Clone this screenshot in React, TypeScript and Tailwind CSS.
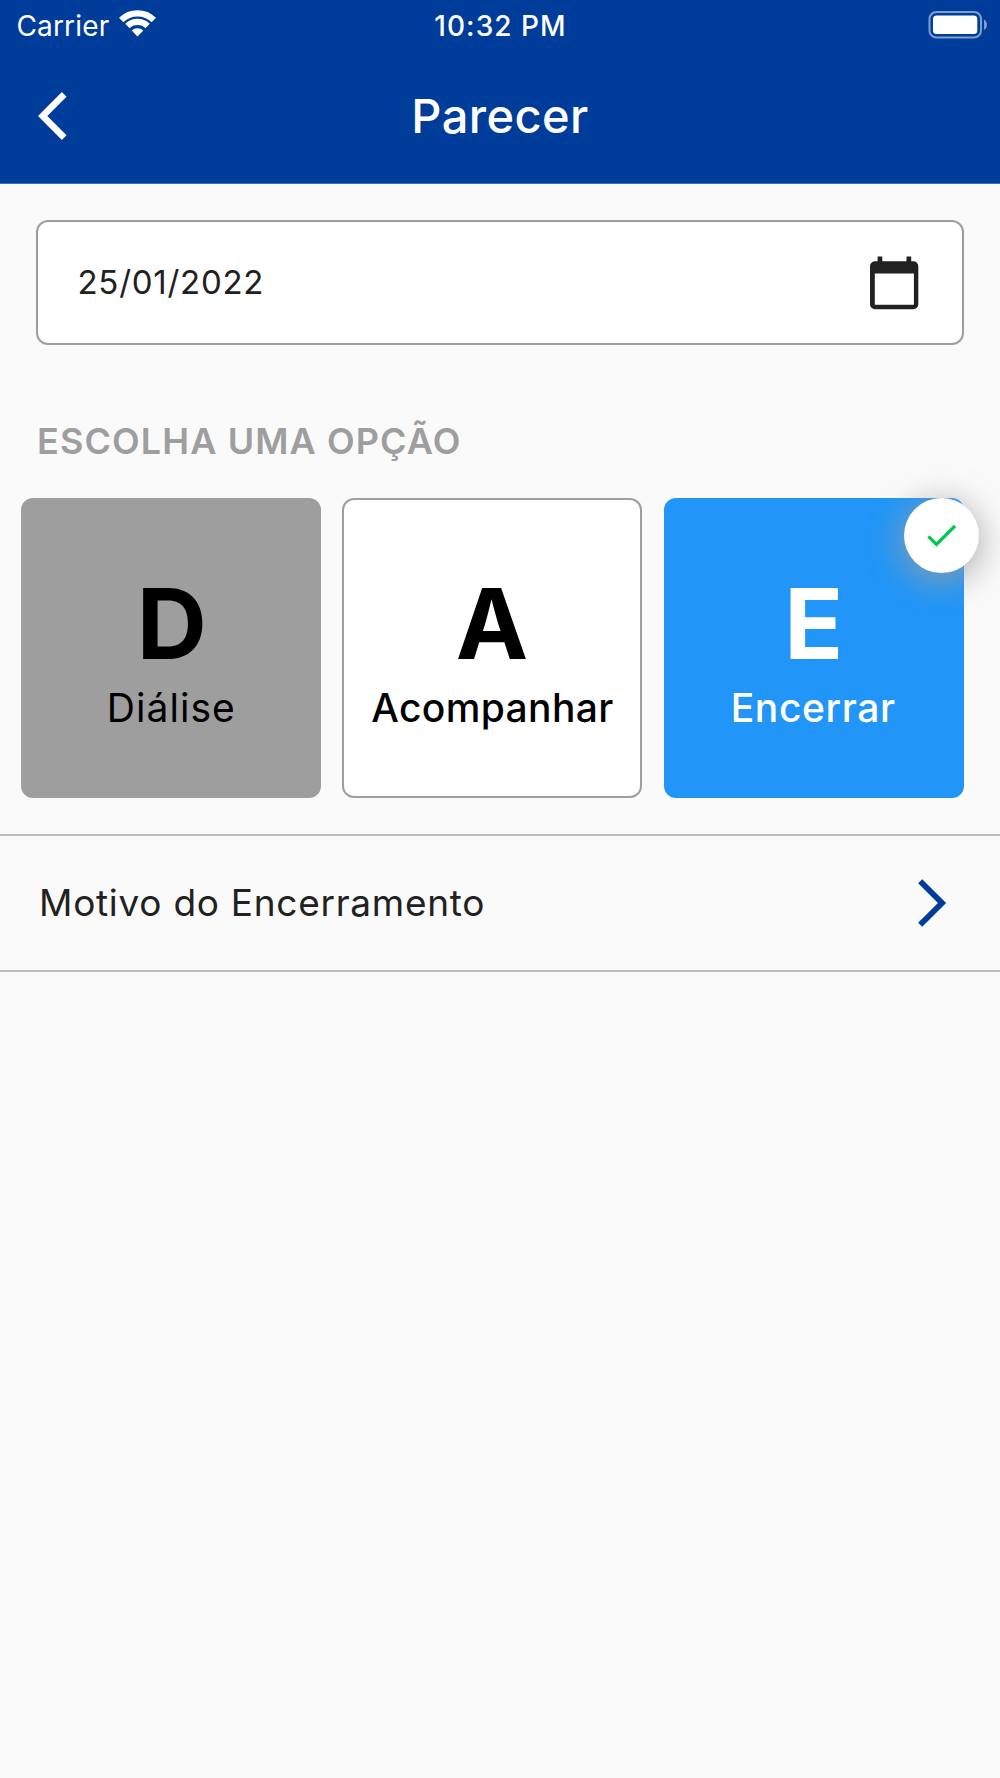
import React from "react";

function StatusBar() {
  return (
    <div className="grid h-[51px] grid-cols-3 items-center text-[28px] leading-none">
      <div className="flex items-center gap-[10px] pl-[16.5px]">
        <span className="tracking-[0.15px]">Carrier</span>
        {/* wifi */}
        <svg
          className="mt-[-5px] h-[28px] w-[37px]"
          viewBox="0 0 37 28"
          fill="none"
          stroke="currentColor"
          strokeWidth="6.3"
        >
          <path d="M2.2 10.9A23.5 23.5 0 0 1 34.8 10.9" />
          <path d="M8.4 17A14.4 14.4 0 0 1 28.6 17" />
          <path
            d="M18.5 27.4L12.7 21.6A8.6 8.6 0 0 1 24.3 21.6Z"
            fill="currentColor"
            stroke="none"
          />
        </svg>
      </div>

      <span className="pl-px text-center font-medium tracking-[1.05px]">
        10:32 PM
      </span>

      {/* battery */}
      <svg
        className="mt-[-2px] mr-[12.5px] h-[28px] w-[60px] justify-self-end"
        viewBox="0 0 60 28"
        fill="none"
      >
        <rect
          x="1.5"
          y="1"
          width="51.5"
          height="25.5"
          rx="7"
          stroke="white"
          strokeOpacity="0.5"
          strokeWidth="2"
        />
        <rect x="5" y="4.5" width="44.3" height="18.5" rx="3.5" fill="white" />
        <path d="M56 8.5C60 10.5 60 17 56 19Z" fill="white" fillOpacity="0.5" />
      </svg>
    </div>
  );
}

type OptionProps = {
  letter: string;
  label: string;
  className: string;
  letterClassName?: string;
  labelClassName: string;
  children?: React.ReactNode;
};

function Option({
  letter,
  label,
  className,
  letterClassName = "",
  labelClassName,
  children,
}: OptionProps) {
  return (
    <button
      className={`relative flex h-[300px] w-[300px] flex-col items-center justify-start rounded-xl border-2 pt-[68px] ${className}`}
    >
      <span className={`text-[97px] leading-[112px] font-bold ${letterClassName}`}>
        {letter}
      </span>
      <span className={`text-[39px] leading-[56px] ${labelClassName}`}>
        {label}
      </span>
      {children}
    </button>
  );
}

export default function App() {
  return (
    <div className="min-h-[1778px] w-[1000px] bg-[#fafafa] font-['Inter',sans-serif] text-[#212121]">
      {/* Header */}
      <header className="h-[184px] border-b border-[#3f6db2] bg-[#003c99] text-white">
        <StatusBar />
        <div className="grid h-[130px] grid-cols-3 items-center">
          <button className="pl-[35px]">
            <svg
              className="h-[52px] w-[34px]"
              viewBox="0 0 34 52"
              fill="none"
              stroke="currentColor"
              strokeWidth="6.6"
            >
              <path d="M29.2 4.4L7.7 26L29.2 47.6" />
            </svg>
          </button>
          <h1 className="-mt-[2px] text-center text-[47px] leading-none font-medium tracking-[0.4px]">
            Parecer
          </h1>
        </div>
      </header>

      <main>
        {/* Date */}
        <div className="mx-[36px] mt-[36px] flex h-[125px] items-center justify-between rounded-xl border-2 border-[#9e9e9e] bg-white pr-[43.5px] pl-[39.5px]">
          <span className="text-[33px] leading-none tracking-[0.72px]">
            25/01/2022
          </span>
          <svg className="h-[54px] w-[50px]" viewBox="0 0 50 54">
            <path
              fill="#212121"
              fillRule="evenodd"
              d="M8.6 0.5H13.3V5.3H37.5V0.5H42.2V5.3H44.3A5 5 0 0 1 49.3 10.3V48.2A5 5 0 0 1 44.3 53.2H6A5 5 0 0 1 1 48.2V10.3A5 5 0 0 1 6 5.3H8.6ZM5.8 17.4V48.8H44.9V17.4Z"
            />
          </svg>
        </div>

        <h2 className="mt-[72px] pl-[37px] text-[36px] leading-[48px] font-semibold tracking-[1.1px] text-[#9e9e9e]">
          ESCOLHA UMA OPÇÃO
        </h2>

        {/* Options */}
        <div className="mt-[32.5px] flex gap-[21.2px] pl-[21.3px]">
          <Option
            letter="D"
            label="Diálise"
            className="border-[#9e9e9e] bg-[#9e9e9e] text-black"
            letterClassName="pl-px"
            labelClassName="tracking-[1.05px]"
          />
          <Option
            letter="A"
            label="Acompanhar"
            className="border-[#9e9e9e] bg-white text-black"
            letterClassName="pr-px"
            labelClassName="font-medium tracking-[0.35px]"
          />
          <Option
            letter="E"
            label="Encerrar"
            className="border-[#2196f8] bg-[#2196f8] text-white"
            labelClassName="pr-px font-medium tracking-[0.6px]"
          >
            <span className="absolute -top-[2px] -right-[17px] flex size-[75px] items-center justify-center rounded-full bg-white shadow-[0_6px_32px_3px_rgba(158,158,158,0.8)]">
              <svg
                className="h-[24px] w-[30px]"
                viewBox="0 0 30 24"
                fill="none"
                stroke="#00c853"
                strokeWidth="3.2"
              >
                <path d="M2.4 13.4L10.5 21.5L28.9 3" />
              </svg>
            </span>
          </Option>
        </div>

        {/* Reason */}
        <button className="mt-[36px] flex h-[138.5px] w-full items-center justify-between border-t-2 border-b-2 border-[#bdbdbd] pr-[51px] pl-[39px]">
          <span className="text-[37px] leading-none tracking-[0.72px]">
            Motivo do Encerramento
          </span>
          <svg
            className="h-[52px] w-[34px] text-[#003c99]"
            viewBox="0 0 34 52"
            fill="none"
            stroke="currentColor"
            strokeWidth="5.8"
          >
            <path d="M5.2 4.3L27 26L5.2 47.7" />
          </svg>
        </button>
      </main>
    </div>
  );
}
